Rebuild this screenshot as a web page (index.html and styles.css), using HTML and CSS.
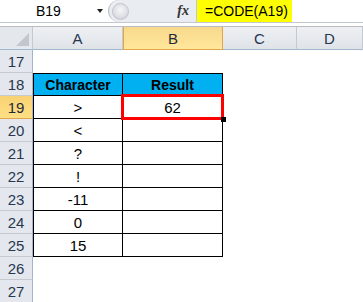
FILE: index.html
```html
<!DOCTYPE html>
<html lang="en">
<head>
    <meta charset="UTF-8">
    <title>CODE function</title>
    <link rel="stylesheet" href="styles.css">
</head>
<body>
    <!-- Formula bar -->
    <div class="formula-bar">
        <div class="name-box">
            <span>B19</span>
            <span class="arrow"></span>
        </div>
        <div class="bar-mid">
            <span class="knob"></span>
            <span class="fx">fx</span>
        </div>
        <div class="formula">
            <span class="formula-text">=CODE(A19)</span>
        </div>
    </div>
    <div class="spacer"></div>

    <!-- Sheet -->
    <div class="sheet">
        <div class="corner"><span class="tri"></span></div>
        <div class="col-head">A</div>
        <div class="col-head active">B</div>
        <div class="col-head">C</div>
        <div class="col-head">D</div>

        <div class="row-head">17</div>
        <div></div><div></div><div></div><div></div>

        <div class="row-head">18</div>
        <div class="cell th first">Character</div>
        <div class="cell th">Result</div>
        <div></div><div></div>

        <div class="row-head active">19</div>
        <div class="cell first">&gt;</div>
        <div class="cell selected">62</div>
        <div></div><div></div>

        <div class="row-head">20</div>
        <div class="cell first">&lt;</div>
        <div class="cell"></div>
        <div></div><div></div>

        <div class="row-head">21</div>
        <div class="cell first">?</div>
        <div class="cell"></div>
        <div></div><div></div>

        <div class="row-head">22</div>
        <div class="cell first">!</div>
        <div class="cell"></div>
        <div></div><div></div>

        <div class="row-head">23</div>
        <div class="cell first">-11</div>
        <div class="cell"></div>
        <div></div><div></div>

        <div class="row-head">24</div>
        <div class="cell first">0</div>
        <div class="cell"></div>
        <div></div><div></div>

        <div class="row-head">25</div>
        <div class="cell first">15</div>
        <div class="cell"></div>
        <div></div><div></div>

        <div class="row-head">26</div>
        <div></div><div></div><div></div><div></div>

        <div class="row-head">27</div>
        <div></div><div></div><div></div><div></div>
    </div>
</body>
</html>
```

FILE: styles.css
```css
body, html {
    margin: 0;
    padding: 0;
    background: #fff;
    font-family: "Liberation Sans", Arial, sans-serif;
    font-size: 14px;
    color: #000;
    overflow: hidden;
}
/* Formula bar */
.formula-bar {
    display: flex;
    height: 22px;
    border-bottom: 1px solid #c3c8cf;
}
.name-box {
    width: 108px;
    box-sizing: border-box;
    display: flex;
    align-items: center;
    justify-content: space-between;
    padding: 0 5px 0 36px;
    font-size: 14px;
}
.arrow {
    width: 0;
    height: 0;
    border-left: 3px solid transparent;
    border-right: 3px solid transparent;
    border-top: 4px solid #222;
}
.bar-mid {
    width: 88px;
    display: flex;
    align-items: center;
    justify-content: space-between;
    background: #e9ecf0;
    border-radius: 11px 0 0 11px;
    border-left: 1px solid #b9bec6;
    box-sizing: border-box;
    padding: 0 7px 0 3px;
}
.knob {
    width: 15px;
    height: 15px;
    border-radius: 50%;
    background: radial-gradient(circle at 50% 40%, #f6f7f8 0%, #dcdfe3 60%, #c6cace 100%);
    border: 1px solid #c0c4ca;
}
.fx {
    font-family: "Liberation Serif", serif;
    font-style: italic;
    font-weight: bold;
    font-size: 14px;
    color: #333;
}
.formula {
    flex: 1;
    display: flex;
    border-left: 1px solid #c3c8cf;
}
.formula-text {
    display: flex;
    align-items: center;
    width: 95px;
    box-sizing: border-box;
    padding-left: 8px;
    background: #ffff00;
    font-size: 14px;
}
.spacer {
    height: 3px;
    border-bottom: 1px solid #b8bdc4;
}
/* Sheet grid */
.sheet {
    display: grid;
    grid-template-columns: 33px 90px 100px 74px 66px;
    grid-auto-rows: 23px;
}
.sheet > div {
    box-sizing: border-box;
}
.corner {
    position: relative;
    background: #e4e7ec;
    border-right: 1px solid #c5cad1;
    border-bottom: 1px solid #9eb6ce;
}
.tri {
    position: absolute;
    right: 3px;
    bottom: 3px;
    width: 0;
    height: 0;
    border-left: 13px solid transparent;
    border-bottom: 13px solid #c3c7cd;
}
.col-head {
    display: flex;
    align-items: center;
    justify-content: center;
    background: linear-gradient(#eef0f3, #dfe3e8);
    border-right: 1px solid #c5cad1;
    border-bottom: 1px solid #9eb6ce;
    color: #27374f;
    font-size: 15px;
}
.col-head.active {
    background: linear-gradient(#f8d98c, #ffe79b);
    border: 1px solid #e2a645;
    border-top: none;
    color: #1f2a3c;
}
.row-head {
    display: flex;
    align-items: center;
    justify-content: center;
    background: #e4e8ee;
    border-right: 1px solid #9eb6ce;
    border-bottom: 1px solid #c5cad1;
    color: #27374f;
    font-size: 15px;
}
.row-head.active {
    background: linear-gradient(#f8d272, #ffdf85);
    border-bottom-color: #e2a645;
    color: #1f2a3c;
}
/* Table cells */
.cell {
    display: flex;
    align-items: center;
    justify-content: center;
    border-right: 1px solid #000;
    border-bottom: 1px solid #000;
    font-size: 15px;
}
.cell.first {
    border-left: 1px solid #000;
}
.cell.th {
    background: #00b0f0;
    border-top: 1px solid #000;
    font-weight: bold;
    font-size: 14px;
}
.cell.selected {
    position: relative;
}
.cell.selected::after {
    content: "";
    position: absolute;
    top: -2px;
    left: -2px;
    right: -2px;
    bottom: -2px;
    border: 3px solid #ff0000;
}
.cell.selected::before {
    content: "";
    position: absolute;
    right: -4px;
    bottom: -4px;
    width: 5px;
    height: 5px;
    background: #000;
    z-index: 1;
}
```
